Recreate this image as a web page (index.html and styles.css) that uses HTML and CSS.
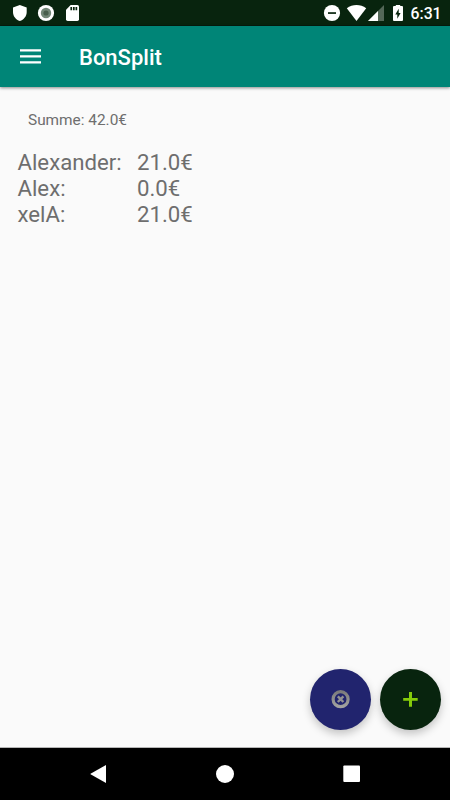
FILE: index.html
```html
<!DOCTYPE html>
<html lang="de">
<head>
    <meta charset="UTF-8">
    <meta name="viewport" content="width=device-width, initial-scale=1.0">
    <title>BonSplit</title>
    <link rel="stylesheet" href="styles.css">
</head>
<body>
    <div class="status-bar">
        <svg class="status-icons" width="90" height="26" viewBox="0 0 90 26">
            <path fill="#fff" d="M19.8 5 L26.7 7.6 V12 C26.7 16.2 23.8 19.8 19.8 21 C15.8 19.8 13 16.2 13 12 V7.6 Z"/>
            <circle cx="46" cy="13" r="8.1" fill="#fff"/>
            <circle cx="46" cy="13" r="5.2" fill="#728777"/>
            <circle cx="46" cy="13" r="2.6" fill="#485f4d"/>
            <path fill="#fff" d="M70.7 5 H77.3 Q79 5 79 6.6 V19.3 Q79 21 77.3 21 H67.7 Q66 21 66 19.3 V9.7 Z"/>
            <path fill="#08240e" d="M70.4 7h1.7v3.2h-1.7zM73 7h1.7v3.2H73zM75.5 7h1.7v3.2h-1.7z"/>
        </svg>
        <svg class="status-icons" width="90" height="26" viewBox="320 0 90 26">
            <circle cx="332" cy="13" r="8.1" fill="#fff"/>
            <path fill="#08240e" d="M328 12.2h8v1.7h-8z"/>
            <path fill="#fff" d="M346.8 8.2 C352.6 3.9 360.4 3.9 366.2 8.2 L356.5 21 Z"/>
            <path fill="#546858" d="M384 5 V21 H368 Z"/>
            <path fill="#fff" d="M378 11 V21 H368 Z"/>
            <path fill="#fff" d="M395.8 5 H400.2 V6 H402 Q403 6 403 7 V20 Q403 21 402 21 H394 Q393 21 393 20 V7 Q393 6 394 6 H395.8 Z"/>
            <path fill="#08240e" d="M398.7 8.8 V13 H400.6 L397.3 18.8 V14.6 H395.3 Z"/>
        </svg>
        <span class="clock">6:31</span>
    </div>

    <header class="toolbar">
        <svg class="menu-icon" width="22" height="17" viewBox="0 0 22 17">
            <path fill="#fff" d="M0 1.2h21v2.3H0zM0 7.3h21v2.3H0zM0 13.3h21v2.3H0z"/>
        </svg>
        <h1>BonSplit</h1>
    </header>

    <main class="content">
        <p class="sum">Summe: 42.0€</p>
        <div class="shares">
            <span>Alexander:</span><span>21.0€</span>
            <span>Alex:</span><span>0.0€</span>
            <span>xelA:</span><span>21.0€</span>
        </div>
        <div class="actions">
            <button class="fab fab-clear" type="button" aria-label="Löschen">
                <svg width="19" height="19" viewBox="0 0 19 19">
                    <defs>
                        <linearGradient id="ring" x1="0" y1="0" x2="0" y2="1">
                            <stop offset="0" stop-color="#7c7c7c"/>
                            <stop offset="1" stop-color="#a2a2a0"/>
                        </linearGradient>
                    </defs>
                    <circle cx="9.6" cy="9.2" r="7.5" fill="none" stroke="url(#ring)" stroke-width="3.2"/>
                    <path d="M6.8 6.4 L12.4 12 M12.4 6.4 L6.8 12" stroke="#929292" stroke-width="2.4"/>
                </svg>
            </button>
            <button class="fab fab-add" type="button" aria-label="Hinzufügen">
                <svg width="15" height="15" viewBox="0 0 15 15">
                    <path fill="#85cc0a" d="M6 0h3v6h5.7v2.8H9v5.9H6V8.8H0.2V6H6z"/>
                </svg>
            </button>
        </div>
    </main>

    <nav class="nav-bar">
        <svg width="20" height="20" viewBox="0 0 20 20"><path fill="#fff" d="M16 1 V19 L0.5 10.3 V9.7 Z"/></svg>
        <svg width="20" height="20" viewBox="0 0 20 20"><circle cx="9" cy="10" r="9" fill="#fff"/></svg>
        <svg width="20" height="20" viewBox="0 0 20 20"><rect x="1.3" y="1.5" width="16.7" height="16.5" rx="1" fill="#fff"/></svg>
    </nav>
</body>
</html>
```
FILE: styles.css
```css
* {
    margin: 0;
    padding: 0;
    box-sizing: border-box;
}

body {
    font-family: Roboto, sans-serif;
    background: #fafafa;
    display: flex;
    flex-direction: column;
    height: 100vh;
    overflow: hidden;
}

.status-bar {
    display: flex;
    height: 26px;
    background: #08240e;
    border-bottom: 1px solid #061c0e;
}

.status-icons:nth-child(2) {
    margin-left: auto;
}

.clock {
    width: 40px;
    padding-left: 0.5px;
    font-size: 15.8px;
    font-weight: 500;
    line-height: 28px;
    color: #fff;
}

.toolbar {
    display: flex;
    align-items: center;
    height: 61px;
    padding-left: 20px;
    background: #008577;
    box-shadow: 0 1px 3px rgba(0, 0, 0, 0.45);
}

.menu-icon {
    margin-right: 37px;
}

.toolbar h1 {
    padding-top: 2px;
    font-size: 22px;
    font-weight: 500;
    line-height: 26px;
    color: #fff;
}

.content {
    display: flex;
    flex-direction: column;
    flex: 1;
    padding: 24px 9px 17px 17.5px;
    border-bottom: 1px solid #b5b5b5;
    color: #6e6e6e;
}

.sum {
    padding-left: 10.5px;
    font-size: 15.4px;
    line-height: 18px;
}

.shares {
    display: grid;
    grid-template-columns: 119.5px auto;
    margin-top: 20px;
    font-size: 22.2px;
    line-height: 26px;
}

.actions {
    display: flex;
    justify-content: flex-end;
    gap: 9px;
    margin-top: auto;
}

.fab {
    display: flex;
    align-items: center;
    justify-content: center;
    width: 61px;
    height: 61px;
    border: none;
    border-radius: 50%;
    box-shadow: 0 4px 8px rgba(0, 0, 0, 0.22);
}

.fab-clear {
    background: #21246e;
}

.fab-add {
    background: #08240e;
}

.nav-bar {
    display: flex;
    align-items: center;
    justify-content: space-between;
    height: 52px;
    padding: 0 88px 0 90px;
    background: #000;
}
```
